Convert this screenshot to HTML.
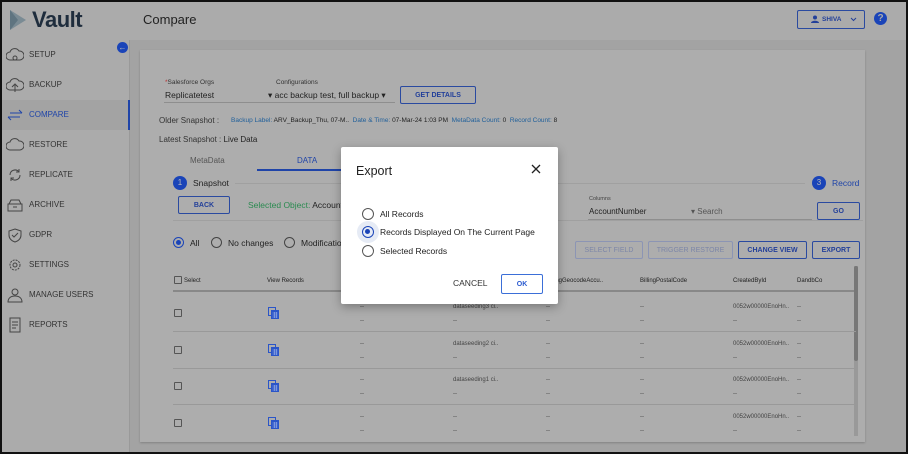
<!DOCTYPE html>
<html><head><meta charset="utf-8"><style>
*{box-sizing:border-box;margin:0;padding:0}
body{width:908px;height:454px;overflow:hidden;font-family:"Liberation Sans",sans-serif;background:#a3a3a3;position:relative;color:#222}
.a{position:absolute;white-space:nowrap}
.frame{position:absolute;left:0;top:0;width:908px;height:454px;border:2px solid #111;z-index:50;pointer-events:none}
.hdr{left:0;top:0;width:908px;height:40px;background:#ababab}
.side{left:0;top:40px;width:130px;height:414px;background:#ababab;border-right:1px solid #999}
.si{position:absolute;left:0;width:130px;height:30px;font-size:8px;color:#333;padding-left:29px;line-height:30px}
.si svg{position:absolute;left:6px;top:7px}
.card{left:140px;top:50px;width:725px;height:392px;background:#adadad;box-shadow:0 1px 2px rgba(0,0,0,.2)}
.btn{position:absolute;border:1px solid #2a4aa0;color:#23409a;font-size:7px;border-radius:2px;font-weight:bold;display:flex;align-items:center;justify-content:center}
.btn.dis{border-color:#8c95b4;color:#7c86a8}
.rad{position:absolute;width:11px;height:11px;border:1px solid #444;border-radius:50%}
.rad.on{border-color:#1a44b8}
.rad.on:after{content:"";position:absolute;left:2px;top:2px;width:5px;height:5px;border-radius:50%;background:#1a44b8}
.hl{position:absolute;height:1px;background:#8e8e8e}
.cb{position:absolute;width:8px;height:8px;border:1px solid #555;border-radius:1px}
.ic{position:absolute}
.d{position:absolute;font-size:6px;color:#444}
</style></head><body>
<div class="a hdr"></div>
<svg class="a" style="left:8px;top:8px" width="20" height="24" viewBox="0 0 20 24"><path d="M2 2 L18 12 L2 22 Z" fill="#7a8b94"/><path d="M2 2 L10 12 L2 22" fill="#5f7480"/></svg>
<div class="a" style="left:32px;top:7px;font-size:22px;font-weight:bold;color:#1f2d3d;letter-spacing:-0.5px">Vault</div>
<div class="a" style="left:143px;top:12px;font-size:13px;color:#222">Compare</div>
<div class="a" style="left:797px;top:10px;width:68px;height:19px;border:1px solid #2a4aa0;border-radius:2px"></div>
<svg class="a" style="left:811px;top:15px" width="8" height="8"><circle cx="4" cy="2.5" r="2" fill="#23409a"/><path d="M0 8c0-3 8-3 8 0z" fill="#23409a"/></svg>
<div class="a" style="left:822px;top:16px;font-size:6.5px;color:#23409a;font-weight:bold">SHIVA</div>
<svg class="a" style="left:850px;top:17px" width="7" height="5"><path d="M1 1l2.5 2.5L6 1" fill="none" stroke="#23409a"/></svg>
<div class="a" style="left:874px;top:12px;width:13px;height:13px;border-radius:50%;background:#1a44b8;color:#aaa;font-size:10px;font-weight:bold;text-align:center;line-height:13px">?</div>

<div class="a side"></div>
<div class="a" style="left:117px;top:42px;width:11px;height:11px;border-radius:50%;background:#1a44b8;color:#bbb;font-size:8px;text-align:center;line-height:11px">&#8592;</div>
<div class="si" style="top:40px"><svg width="18" height="16"><path d="M4 13a4 4 0 0 1 0-8 5 5 0 0 1 9-1 4 4 0 0 1 1 9z" fill="none" stroke="#444"/><circle cx="9" cy="11" r="2" fill="none" stroke="#444"/></svg>SETUP</div>
<div class="si" style="top:70px"><svg width="18" height="16"><path d="M4 13a4 4 0 0 1 0-8 5 5 0 0 1 9-1 4 4 0 0 1 1 9z" fill="none" stroke="#444"/><path d="M9 15V8M6 10l3-3 3 3" fill="none" stroke="#444"/></svg>BACKUP</div>
<div class="si" style="top:100px;background:#a3a3a3;color:#1f44a8;border-right:2px solid #1f44a8"><svg width="18" height="16"><path d="M4 6h12M13 3l3 3M14 10H2M5 13l-3-3" fill="none" stroke="#1f44a8"/></svg>COMPARE</div>
<div class="si" style="top:130px"><svg width="18" height="16"><path d="M4 13a4 4 0 0 1 0-8 5 5 0 0 1 9-1 4 4 0 0 1 1 9z" fill="none" stroke="#444"/></svg>RESTORE</div>
<div class="si" style="top:160px"><svg width="18" height="16"><path d="M4 8a5 5 0 0 1 9-3M14 8a5 5 0 0 1-9 3M13 2v3h-3M5 14v-3h3" fill="none" stroke="#444"/></svg>REPLICATE</div>
<div class="si" style="top:190px"><svg width="18" height="16"><path d="M2 7h14v7H2zM3 7l2-4h8l2 4M7 10h4" fill="none" stroke="#444"/></svg>ARCHIVE</div>
<div class="si" style="top:220px"><svg width="18" height="16"><path d="M9 2l6 2v4c0 4-3 6-6 7-3-1-6-3-6-7V4z" fill="none" stroke="#444"/><path d="M6 8l2 2 4-4" fill="none" stroke="#444"/></svg>GDPR</div>
<div class="si" style="top:250px"><svg width="18" height="16"><circle cx="9" cy="8" r="5" fill="none" stroke="#444" stroke-dasharray="2 1"/><circle cx="9" cy="8" r="2" fill="none" stroke="#444"/></svg>SETTINGS</div>
<div class="si" style="top:280px"><svg width="18" height="16"><circle cx="9" cy="5" r="3" fill="none" stroke="#444"/><path d="M2 15c0-4 3-6 7-6s7 2 7 6z" fill="none" stroke="#444"/></svg>MANAGE USERS</div>
<div class="si" style="top:310px"><svg width="18" height="16"><path d="M4 1h10v14H4zM6 5h6M6 8h6M6 11h4" fill="none" stroke="#444"/></svg>REPORTS</div>

<div class="a card"></div>
<div class="a" style="left:165px;top:79px;font-size:6.5px;color:#333"><span style="color:#b33">*</span>Salesforce Orgs</div>
<div class="a" style="left:276px;top:79px;font-size:6.5px;color:#333">Configurations</div>
<div class="a" style="left:165px;top:90px;font-size:8.5px">Replicatetest</div>
<div class="a" style="left:268px;top:90px;font-size:8.5px">&#9662; acc backup test, full backup &#9662;</div>
<div class="hl" style="left:164px;top:102px;width:231px"></div>
<div class="btn" style="left:400px;top:86px;width:76px;height:18px">GET DETAILS</div>
<div class="a" style="left:159px;top:116px;font-size:8px;color:#333">Older Snapshot :</div>
<div class="a" style="left:231px;top:117px;font-size:6.5px;color:#1f5f9a">Backup Label: <span style="color:#222">ARV_Backup_Thu, 07-M..</span> &nbsp;Date &amp; Time: <span style="color:#222">07-Mar-24 1:03 PM</span> &nbsp;MetaData Count: <span style="color:#222">0</span> &nbsp;Record Count: <span style="color:#222">8</span></div>
<div class="a" style="left:159px;top:135px;font-size:8px;color:#333">Latest Snapshot : <span style="color:#222">Live Data</span></div>
<div class="a" style="left:190px;top:156px;font-size:8px;color:#555">MetaData</div>
<div class="a" style="left:297px;top:156px;font-size:8px;color:#1f44a8">DATA</div>
<div class="a" style="left:257px;top:169px;width:90px;height:2px;background:#1f44a8"></div>
<div class="a" style="left:173px;top:176px;width:14px;height:14px;border-radius:50%;background:#1a44b8;color:#bbb;font-size:8px;text-align:center;line-height:14px">1</div>
<div class="a" style="left:193px;top:178px;font-size:8.5px">Snapshot</div>
<div class="hl" style="left:235px;top:183px;width:570px;background:#a0a0a0"></div>
<div class="a" style="left:812px;top:176px;width:14px;height:14px;border-radius:50%;background:#1a44b8;color:#bbb;font-size:8px;text-align:center;line-height:14px">3</div>
<div class="a" style="left:832px;top:178px;font-size:8.5px;color:#1f44a8">Record</div>
<div class="btn" style="left:178px;top:196px;width:52px;height:18px">BACK</div>
<div class="a" style="left:248px;top:200px;font-size:8.5px;color:#2a8a50">Selected Object: <span style="color:#222">Account</span></div>
<div class="a" style="left:589px;top:196px;font-size:5.5px;color:#444">Columns</div>
<div class="a" style="left:589px;top:207px;font-size:8px">AccountNumber</div>
<div class="a" style="left:691px;top:207px;font-size:8px;color:#555">&#9662; Search</div>
<div class="hl" style="left:588px;top:219px;width:224px"></div>
<div class="btn" style="left:817px;top:202px;width:43px;height:18px">GO</div>
<div class="hl" style="left:173px;top:220px;width:690px;background:#a0a0a0"></div>
<div class="rad on" style="left:173px;top:237px"></div>
<div class="a" style="left:190px;top:238px;font-size:8.5px">All</div>
<div class="rad" style="left:211px;top:237px"></div>
<div class="a" style="left:228px;top:238px;font-size:8.5px">No changes</div>
<div class="rad" style="left:284px;top:237px"></div>
<div class="a" style="left:301px;top:238px;font-size:8.5px">Modifications</div>
<div class="btn dis" style="left:575px;top:241px;width:68px;height:18px;font-weight:normal">SELECT FIELD</div>
<div class="btn dis" style="left:648px;top:241px;width:85px;height:18px;font-weight:normal">TRIGGER RESTORE</div>
<div class="btn" style="left:738px;top:241px;width:69px;height:18px">CHANGE VIEW</div>
<div class="btn" style="left:812px;top:241px;width:48px;height:18px">EXPORT</div>
<div class="cb" style="left:174px;top:276px"></div>
<div class="a" style="left:184px;top:278px;font-size:6px">Select</div>
<div class="a" style="left:267px;top:278px;font-size:6px">View Records</div>
<div class="a" style="left:546px;top:278px;font-size:6px">BillingGeocodeAccu..</div>
<div class="a" style="left:640px;top:278px;font-size:6px">BillingPostalCode</div>
<div class="a" style="left:733px;top:278px;font-size:6px">CreatedById</div>
<div class="a" style="left:797px;top:278px;font-size:6px">DandbCo</div>
<div class="hl" style="left:173px;top:290px;width:683px;height:2px;background:#888"></div>
<div class="a" style="left:854px;top:266px;width:4px;height:170px;background:#999"></div>
<div class="a" style="left:854px;top:266px;width:4px;height:95px;background:#777;border-radius:2px"></div>

<div id="rows"></div>
<script>
var ys=[304,341,377,414],names=["dataseeding3 ci..","dataseeding2 ci..","dataseeding1 ci..","--"],h="";
var icon='<svg width="11" height="12"><rect x="0.5" y="0.5" width="7" height="8" fill="none" stroke="#2a55c8"/><rect x="3" y="3" width="8" height="9" fill="#2a55c8"/><path d="M4.5 6h5M4.5 8h5M4.5 10h5M6.5 5v6M8.5 5v6" stroke="#9fb4e6" stroke-width="0.6"/></svg>';
for(var i=0;i<4;i++){var y=ys[i];
h+='<div class="cb" style="left:174px;top:'+(y+5)+'px"></div><div class="ic" style="left:268px;top:'+(y+2)+'px">'+icon+'</div>';
var cols=[[360,"--"],[453,names[i]],[546,"--"],[640,"--"],[733,"0052w00000EnoHn.."],[797,"--"]];
for(var c=0;c<cols.length;c++){h+='<div class="d" style="left:'+cols[c][0]+'px;top:'+y+'px">'+cols[c][1]+'</div><div class="d" style="left:'+cols[c][0]+'px;top:'+(y+14)+'px">--</div>';}
if(i<3)h+='<div class="hl" style="left:173px;top:'+(y+27)+'px;width:683px;background:#999"></div>';}
document.getElementById("rows").innerHTML=h;
</script>

<div class="a" style="left:341px;top:147px;width:217px;height:157px;background:#fff;border-radius:2px;box-shadow:0 3px 10px rgba(0,0,0,.3)"></div>
<div class="a" style="left:356px;top:164px;font-size:12.5px;color:#222">Export</div>
<svg class="a" style="left:531px;top:164px" width="10" height="10"><path d="M1 1l8 8M9 1l-8 8" stroke="#222" stroke-width="1.3"/></svg>
<div class="rad" style="left:362px;top:208px;width:12px;height:12px;border-color:#555"></div>
<div class="a" style="left:380px;top:209px;font-size:8.5px">All Records</div>
<div class="a" style="left:357px;top:221px;width:22px;height:22px;border-radius:50%;background:#e6ebf5"></div>
<div class="rad on" style="left:362px;top:226px;width:12px;height:12px"></div>
<div class="a" style="left:380px;top:227px;font-size:8.5px">Records Displayed On The Current Page</div>
<div class="rad" style="left:362px;top:245px;width:12px;height:12px;border-color:#555"></div>
<div class="a" style="left:380px;top:246px;font-size:8.5px">Selected Records</div>
<div class="a" style="left:453px;top:278px;font-size:8.5px;color:#333">CANCEL</div>
<div class="btn" style="left:501px;top:274px;width:42px;height:20px;border-color:#3b6fd8;color:#2a5ad0">OK</div>
<div class="frame"></div>
</body></html>
